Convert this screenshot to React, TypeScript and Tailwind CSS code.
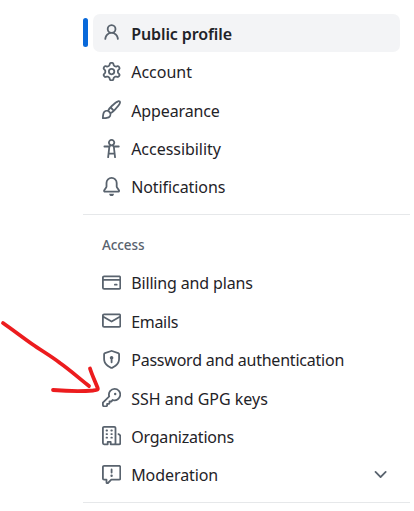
type IconName = keyof typeof icons;

const icons = {
  person:
    "M10.561 8.073a6.005 6.005 0 0 1 3.432 5.142.75.75 0 1 1-1.498.07 4.5 4.5 0 0 0-8.99 0 .75.75 0 0 1-1.498-.07 6.004 6.004 0 0 1 3.431-5.142 3.999 3.999 0 1 1 5.123 0ZM10.5 5a2.5 2.5 0 1 0-5 0 2.5 2.5 0 0 0 5 0Z",
  gear: "M8 0a8.2 8.2 0 0 1 .701.031C9.444.095 9.99.645 10.16 1.29l.288 1.107c.018.066.079.158.212.224.231.114.454.243.668.386.123.082.233.09.299.071l1.103-.303c.644-.176 1.392.021 1.82.63.27.385.506.792.704 1.218.315.675.111 1.422-.364 1.891l-.814.806c-.049.048-.098.147-.088.294.016.257.016.515 0 .772-.01.147.038.246.088.294l.814.806c.475.469.679 1.216.364 1.891a7.977 7.977 0 0 1-.704 1.217c-.428.61-1.176.807-1.82.63l-1.102-.302c-.067-.019-.177-.011-.3.071a5.909 5.909 0 0 1-.668.386c-.133.066-.194.158-.211.224l-.29 1.106c-.168.646-.715 1.196-1.458 1.26a8.006 8.006 0 0 1-1.402 0c-.743-.064-1.289-.614-1.458-1.26l-.289-1.106c-.018-.066-.079-.158-.212-.224a5.738 5.738 0 0 1-.668-.386c-.123-.082-.233-.09-.299-.071l-1.103.303c-.644.176-1.392-.021-1.82-.63a8.12 8.12 0 0 1-.704-1.218c-.315-.675-.111-1.422.363-1.891l.815-.806c.05-.048.098-.147.088-.294a6.214 6.214 0 0 1 0-.772c.01-.147-.038-.246-.088-.294l-.815-.806C.635 6.045.431 5.298.746 4.623a7.92 7.92 0 0 1 .704-1.217c.428-.61 1.176-.807 1.82-.63l1.102.302c.067.019.177.011.3-.071.214-.143.437-.272.668-.386.133-.066.194-.158.211-.224l.29-1.106C6.009.645 6.556.095 7.299.03 7.53.01 7.764 0 8 0Zm-.571 1.525c-.036.003-.108.036-.137.146l-.289 1.105c-.147.561-.549.967-.998 1.189-.173.086-.34.183-.5.29-.417.278-.97.423-1.529.27l-1.103-.303c-.109-.03-.175.016-.195.045-.22.312-.412.644-.573.99-.014.031-.021.11.059.19l.815.806c.411.406.562.957.53 1.456a4.709 4.709 0 0 0 0 .582c.032.499-.119 1.05-.53 1.456l-.815.806c-.081.08-.073.159-.059.19.162.346.353.677.573.989.02.03.085.076.195.046l1.102-.303c.56-.153 1.113-.008 1.53.27.161.107.328.204.501.29.447.222.85.629.997 1.189l.289 1.105c.029.109.101.143.137.146a6.6 6.6 0 0 0 1.142 0c.036-.003.108-.036.137-.146l.289-1.105c.147-.561.549-.967.998-1.189.173-.086.34-.183.5-.29.417-.278.97-.423 1.529-.27l1.103.303c.109.029.175-.016.195-.045.22-.313.411-.644.573-.99.014-.031.021-.11-.059-.19l-.815-.806c-.411-.406-.562-.957-.53-1.456a4.709 4.709 0 0 0 0-.582c-.032-.499.119-1.05.53-1.456l.815-.806c.081-.08.073-.159.059-.19a6.464 6.464 0 0 0-.573-.989c-.02-.03-.085-.076-.195-.046l-1.102.303c-.56.153-1.113.008-1.53-.27a4.44 4.44 0 0 0-.501-.29c-.447-.222-.85-.629-.997-1.189l-.289-1.105c-.029-.11-.101-.143-.137-.146a6.6 6.6 0 0 0-1.142 0ZM11 8a3 3 0 1 1-6 0 3 3 0 0 1 6 0ZM9.5 8a1.5 1.5 0 1 0-3.001.001A1.5 1.5 0 0 0 9.5 8Z",
  paintbrush:
    "M11.134 1.535c.7-.509 1.416-.942 2.076-1.155.649-.21 1.463-.267 2.069.34.603.601.568 1.411.368 2.07-.202.668-.624 1.39-1.125 2.096-1.011 1.424-2.496 2.987-3.775 4.249-1.098 1.084-2.132 1.839-3.04 2.3a3.744 3.744 0 0 1-1.055 3.217c-.431.431-1.065.691-1.657.861-.614.177-1.294.287-1.914.357A21.151 21.151 0 0 1 .797 16H.743l.007-.75H.749L.742 16a.75.75 0 0 1-.743-.742l.743-.008-.742.007v-.054a21.25 21.25 0 0 1 .13-2.284c.067-.647.187-1.287.358-1.914.17-.591.43-1.226.86-1.657a3.746 3.746 0 0 1 3.227-1.054c.466-.893 1.225-1.907 2.314-2.982 1.271-1.255 2.833-2.75 4.245-3.777ZM1.62 13.089c-.051.464-.086.929-.104 1.395.466-.018.932-.053 1.396-.104a10.511 10.511 0 0 0 1.668-.309c.526-.151.856-.325 1.011-.48a2.25 2.25 0 1 0-3.182-3.182c-.155.155-.329.485-.48 1.01a10.515 10.515 0 0 0-.309 1.67Zm10.396-10.34c-1.224.89-2.605 2.189-3.822 3.384l1.718 1.718c1.21-1.205 2.51-2.597 3.387-3.833.47-.662.78-1.227.912-1.662.134-.444.032-.551.009-.575h-.001V1.78c-.014-.014-.113-.113-.548.027-.432.14-.995.462-1.655.942Zm-4.832 7.266-.001.001a9.859 9.859 0 0 0 1.63-1.142L7.155 7.216a9.7 9.7 0 0 0-1.161 1.607c.482.302.889.71 1.19 1.192Z",
  accessibility:
    "M9.923 5.302c.063.063.122.129.178.198H14A.75.75 0 0 1 14 7h-3.3l.578 5.163.362 2.997a.75.75 0 0 1-1.49.18L9.868 13H6.132l-.282 2.34a.75.75 0 0 1-1.49-.18l.362-2.997L5.3 7H2a.75.75 0 0 1 0-1.5h3.9a2.54 2.54 0 0 1 .176-.198 3 3 0 1 1 3.847 0ZM9.2 7.073h-.001a1.206 1.206 0 0 0-2.398 0L6.305 11.5h3.39ZM9.5 3a1.5 1.5 0 1 0-3.001.001A1.5 1.5 0 0 0 9.5 3Z",
  bell: "M8 16a2 2 0 0 0 1.985-1.75c.017-.137-.097-.25-.235-.25h-3.5c-.138 0-.252.113-.235.25A2 2 0 0 0 8 16ZM3 5a5 5 0 0 1 10 0v2.947c0 .05.015.098.042.139l1.703 2.555A1.519 1.519 0 0 1 13.482 13H2.518a1.516 1.516 0 0 1-1.263-2.36l1.703-2.554A.255.255 0 0 0 3 7.947Zm5-3.5A3.5 3.5 0 0 0 4.5 5v2.947c0 .346-.102.683-.294.97l-1.703 2.556a.017.017 0 0 0-.003.01l.001.006c0 .002.002.004.004.006l.006.004.007.001h10.964l.007-.001.006-.004.004-.006.001-.007a.017.017 0 0 0-.003-.01l-1.703-2.554a1.745 1.745 0 0 1-.294-.97V5A3.5 3.5 0 0 0 8 1.5Z",
  creditCard:
    "M10.75 9a.75.75 0 0 0 0 1.5h1.5a.75.75 0 0 0 0-1.5h-1.5ZM0 3.75C0 2.784.784 2 1.75 2h12.5c.966 0 1.75.784 1.75 1.75v8.5A1.75 1.75 0 0 1 14.25 14H1.75A1.75 1.75 0 0 1 0 12.25ZM14.5 6.5h-13v5.75c0 .138.112.25.25.25h12.5a.25.25 0 0 0 .25-.25Zm0-2.75a.25.25 0 0 0-.25-.25H1.75a.25.25 0 0 0-.25.25V5h13Z",
  mail: "M1.75 2h12.5c.966 0 1.75.784 1.75 1.75v8.5A1.75 1.75 0 0 1 14.25 14H1.75A1.75 1.75 0 0 1 0 12.25v-8.5C0 2.784.784 2 1.75 2ZM1.5 12.251c0 .138.112.25.25.25h12.5a.25.25 0 0 0 .25-.25V5.809L8.38 9.397a.75.75 0 0 1-.76 0L1.5 5.809v6.442Zm13-8.181v-.32a.25.25 0 0 0-.25-.25H1.75a.25.25 0 0 0-.25.25v.32L8 7.88Z",
  shieldLock:
    "m8.533.133 5.25 1.68A1.75 1.75 0 0 1 15 3.48V7c0 1.566-.32 3.182-1.303 4.682-.983 1.498-2.585 2.813-5.032 3.855a1.697 1.697 0 0 1-1.33 0c-2.447-1.042-4.049-2.357-5.032-3.855C1.32 10.182 1 8.566 1 7V3.48a1.75 1.75 0 0 1 1.217-1.667l5.25-1.68a1.748 1.748 0 0 1 1.066 0Zm-.61 1.429.001.001-5.25 1.68a.251.251 0 0 0-.174.237V7c0 1.36.275 2.666 1.057 3.859.784 1.194 2.121 2.342 4.366 3.298a.196.196 0 0 0 .154 0c2.245-.957 3.582-2.103 4.366-3.297C13.225 9.666 13.5 8.358 13.5 7V3.48a.25.25 0 0 0-.174-.238l-5.25-1.68a.25.25 0 0 0-.153 0ZM9.5 6.5c0 .536-.286 1.032-.75 1.3v2.45a.75.75 0 0 1-1.5 0V7.8A1.5 1.5 0 1 1 9.5 6.5Z",
  key: "M10.5 0a5.499 5.499 0 1 1-1.288 10.848l-.932.932a.749.749 0 0 1-.53.22H7v.75a.749.749 0 0 1-.22.53l-.5.5a.749.749 0 0 1-.53.22H5v.75a.749.749 0 0 1-.22.53l-.5.5a.749.749 0 0 1-.53.22h-2A1.75 1.75 0 0 1 0 14.25v-2c0-.199.079-.389.22-.53l4.932-4.932A5.5 5.5 0 0 1 10.5 0Zm-4 5.5c-.001.431.069.86.205 1.269a.75.75 0 0 1-.181.768L1.5 12.56v1.69c0 .138.112.25.25.25h1.69l.06-.06v-1.19a.75.75 0 0 1 .75-.75h1.19l.06-.06v-1.19a.75.75 0 0 1 .75-.75h1.19l1.023-1.025a.75.75 0 0 1 .768-.18A4 4 0 1 0 6.5 5.5ZM11 6a1 1 0 1 1 0-2 1 1 0 0 1 0 2Z",
  organization:
    "M1.75 16A1.75 1.75 0 0 1 0 14.25V1.75C0 .784.784 0 1.75 0h8.5C11.216 0 12 .784 12 1.75v12.5c0 .085-.006.168-.018.25h2.268a.25.25 0 0 0 .25-.25V8.285a.25.25 0 0 0-.111-.208l-1.055-.703a.749.749 0 1 1 .832-1.248l1.055.703c.487.325.779.871.779 1.456v5.965A1.75 1.75 0 0 1 14.25 16h-3.5a.766.766 0 0 1-.197-.026c-.099.017-.2.026-.303.026h-3a.75.75 0 0 1-.75-.75V14h-1v1.25a.75.75 0 0 1-.75.75Zm-.25-1.75c0 .138.112.25.25.25H4v-1.25a.75.75 0 0 1 .75-.75h2.5a.75.75 0 0 1 .75.75v1.25h2.25a.25.25 0 0 0 .25-.25V1.75a.25.25 0 0 0-.25-.25h-8.5a.25.25 0 0 0-.25.25ZM3.75 6h.5a.75.75 0 0 1 0 1.5h-.5a.75.75 0 0 1 0-1.5ZM3 3.75A.75.75 0 0 1 3.75 3h.5a.75.75 0 0 1 0 1.5h-.5A.75.75 0 0 1 3 3.75Zm4 3A.75.75 0 0 1 7.75 6h.5a.75.75 0 0 1 0 1.5h-.5A.75.75 0 0 1 7 6.75ZM7.75 3h.5a.75.75 0 0 1 0 1.5h-.5a.75.75 0 0 1 0-1.5ZM3 9.75A.75.75 0 0 1 3.75 9h.5a.75.75 0 0 1 0 1.5h-.5A.75.75 0 0 1 3 9.75ZM7.75 9h.5a.75.75 0 0 1 0 1.5h-.5a.75.75 0 0 1 0-1.5Z",
  report:
    "M0 1.75C0 .784.784 0 1.75 0h12.5C15.216 0 16 .784 16 1.75v9.5A1.75 1.75 0 0 1 14.25 13H8.06l-2.573 2.573A1.458 1.458 0 0 1 3 14.543V13H1.75A1.75 1.75 0 0 1 0 11.25Zm1.75-.25a.25.25 0 0 0-.25.25v9.5c0 .138.112.25.25.25h2a.75.75 0 0 1 .75.75v2.19l2.72-2.72a.749.749 0 0 1 .53-.22h6.5a.25.25 0 0 0 .25-.25v-9.5a.25.25 0 0 0-.25-.25Zm7 2.25v2.5a.75.75 0 0 1-1.5 0v-2.5a.75.75 0 0 1 1.5 0ZM9 9a1 1 0 1 1-2 0 1 1 0 0 1 2 0Z",
  chevronDown:
    "M12.78 5.22a.749.749 0 0 1 0 1.06l-4.25 4.25a.749.749 0 0 1-1.06 0L3.22 6.28a.749.749 0 1 1 1.06-1.06L8 8.939l3.72-3.719a.749.749 0 0 1 1.06 0Z",
};

function Icon({ name }: { name: IconName }) {
  return (
    <svg viewBox="0 0 16 16" className="size-[19.2px] shrink-0 fill-[#59636e]" aria-hidden="true">
      <path d={icons[name]} />
    </svg>
  );
}

type Item = { icon: IconName; label: string; tracking: string; active?: boolean; expandable?: boolean };

const profileItems: Item[] = [
  { icon: "person", label: "Public profile", tracking: "tracking-[-0.1px]", active: true },
  { icon: "gear", label: "Account", tracking: "tracking-normal" },
  { icon: "paintbrush", label: "Appearance", tracking: "tracking-[-0.12px]" },
  { icon: "accessibility", label: "Accessibility", tracking: "tracking-[-0.04px]" },
  { icon: "bell", label: "Notifications", tracking: "tracking-[-0.08px]" },
];

const accessItems: Item[] = [
  { icon: "creditCard", label: "Billing and plans", tracking: "tracking-[-0.15px]" },
  { icon: "mail", label: "Emails", tracking: "tracking-[-0.3px]" },
  { icon: "shieldLock", label: "Password and authentication", tracking: "tracking-[-0.22px]" },
  { icon: "key", label: "SSH and GPG keys", tracking: "tracking-normal" },
  { icon: "organization", label: "Organizations", tracking: "tracking-[-0.2px]" },
  { icon: "report", label: "Moderation", tracking: "tracking-[-0.08px]", expandable: true },
];

function NavItem({ item }: { item: Item }) {
  return (
    <li className="flex h-[38.4px] items-center">
      <span className={`h-[29px] w-[5px] shrink-0 rounded-[3px] ${item.active ? "bg-[#0969da]" : ""}`} />
      <a
        className={`ml-[5px] mr-[14px] flex h-full flex-1 items-center gap-[10px] rounded-[7px] pl-[9px] pr-[10px] ${
          item.active ? "bg-[#f3f4f6] font-semibold" : ""
        }`}
      >
        <Icon name={item.icon} />
        <span className={`flex-1 whitespace-nowrap pt-[1.8px] text-base leading-6 text-[#1f2328] ${item.tracking}`}>
          {item.label}
        </span>
        {item.expandable && <Icon name="chevronDown" />}
      </a>
    </li>
  );
}

export default function App() {
  return (
    <div className="relative h-[511px] w-[414px] overflow-hidden bg-white font-['Noto_Sans','Open_Sans',sans-serif]">
      <nav className="flex flex-col pl-[83px] pt-[13.8px]">
        <ul>
          {profileItems.map((item) => (
            <NavItem key={item.label} item={item} />
          ))}
        </ul>
        <div className="mr-1 mt-[8.2px] h-px bg-[#e6e8ea]" />
        <h3 className="mt-5 h-[28.4px] pl-[19px] text-[13.5px] font-medium leading-5 tracking-[-0.1px] text-[#59636e]">
          Access
        </h3>
        <ul>
          {accessItems.map((item) => (
            <NavItem key={item.label} item={item} />
          ))}
        </ul>
        <div className="mr-1 mt-[8.2px] h-px bg-[#e6e8ea]" />
      </nav>
      <svg
        className="pointer-events-none absolute left-0 top-[310px]"
        width="110"
        height="95"
        viewBox="0 0 110 95"
        fill="none"
        stroke="#ec1c1e"
        strokeWidth="3.8"
        strokeLinecap="round"
        strokeLinejoin="round"
      >
        <path d="M3 13C13 20 22 27 32 34C42 41 51 46 60 53C70 60 80 69 89 76" />
        <path d="M90 58.500C92 65 95 71 97.500 77.500C98.500 80 97 80 93 80.500C80 81.500 66 81 53 80" />
      </svg>
    </div>
  );
}
